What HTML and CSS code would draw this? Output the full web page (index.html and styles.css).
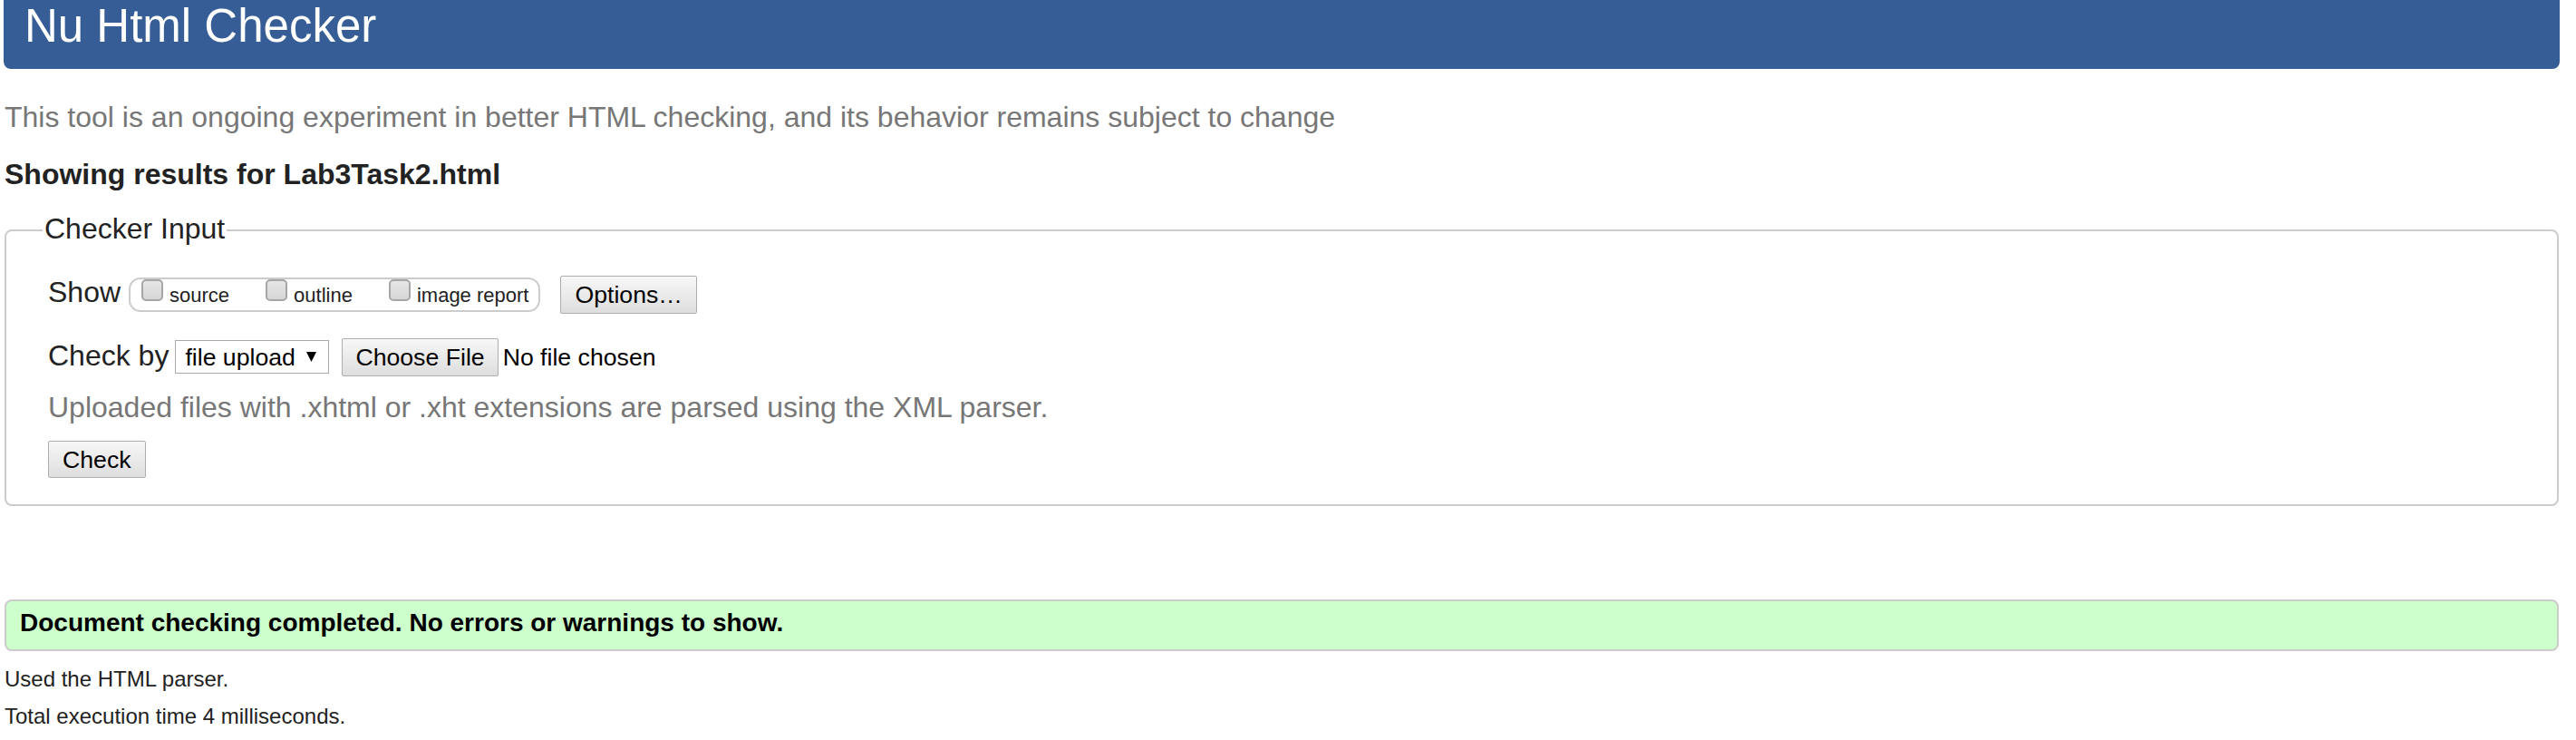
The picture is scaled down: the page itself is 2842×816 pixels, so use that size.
FILE: index.html
```html
<!DOCTYPE html>
<html lang="en">
<head>
<meta charset="utf-8">
<title>Nu Html Checker</title>
<link rel="stylesheet" href="styles.css">
</head>
<body>
<header class="masthead"><h1>Nu Html Checker</h1></header>
<p class="intro">This tool is an ongoing experiment in better HTML checking, and its behavior remains subject to change</p>
<h2 class="results-for">Showing results for Lab3Task2.html</h2>
<fieldset class="checker-input">
  <legend>Checker Input</legend>
  <div class="row show-row">
    <span class="label">Show</span>
    <span class="pill">
      <span class="opt"><span class="cb"></span><span class="opt-text">source</span></span>
      <span class="opt"><span class="cb"></span><span class="opt-text">outline</span></span>
      <span class="opt"><span class="cb"></span><span class="opt-text">image report</span></span>
    </span>
    <button class="btn btn-options" type="button">Options…</button>
  </div>
  <div class="row check-row">
    <span class="label">Check by</span>
    <span class="select"><span>file upload</span><svg class="arrow" width="11" height="11" viewBox="0 0 11 11"><polygon points="0,0 11,0 5.5,11" fill="#000"/></svg></span>
    <button class="btn btn-file" type="button">Choose File</button>
    <span class="no-file">No file chosen</span>
  </div>
  <p class="hint">Uploaded files with .xhtml or .xht extensions are parsed using the XML parser.</p>
  <button class="btn btn-check" type="button">Check</button>
</fieldset>
<div class="success">Document checking completed. No errors or warnings to show.</div>
<p class="meta">Used the HTML parser.</p>
<p class="meta meta-time">Total execution time 4 milliseconds.</p>
</body>
</html>
```
FILE: styles.css
```css
* { box-sizing: border-box; }

body {
  margin: 0;
  padding: 0 19px 0 5px;
  font-family: "Liberation Sans", Arial, sans-serif;
  font-size: 32px;
  color: #222;
  background: #fff;
}

.masthead {
  margin: 0 -1px;
  height: 76px;
  padding: 0 24px 0 23px;
  background: #365d95;
  border-radius: 0 0 8px 8px;
}

.masthead h1 {
  margin: 0;
  font-size: 51px;
  font-weight: normal;
  line-height: 58px;
  color: #fff;
}

.intro {
  margin: 33px 0 0;
  line-height: 40px;
  color: #777;
}

.results-for {
  margin: 23px 0 0;
  font-size: 32px;
  font-weight: bold;
  line-height: 40px;
}

.checker-input {
  margin: 22px 0 0;
  padding: 0 20px 29px 46px;
  border: 2px solid #ccc;
  border-radius: 8px;
  min-width: 0;
}

.checker-input legend {
  margin-left: -6px;
  padding: 0 2px 4px;
  font-size: 32px;
  line-height: 36px;
}

.row {
  display: flex;
  align-items: flex-start;
}

.show-row { margin-top: 28px; }
.check-row { margin-top: 26px; }

.label { line-height: 40px; }

.pill {
  display: flex;
  align-items: flex-start;
  height: 38px;
  margin: 4px 0 0 9px;
  padding: 0 11px 0 12px;
  border: 2px solid #ccc;
  border-radius: 13px;
  font-size: 22px;
}

.opt {
  display: flex;
  align-items: flex-start;
  gap: 7px;
}

.opt + .opt { margin-left: 40px; }

.cb {
  width: 24px;
  height: 24px;
  border: 2px solid #a6a6a6;
  border-radius: 5px;
  background: linear-gradient(#e6e6e6, #d6d6d6);
}

.opt-text {
  margin-top: 5px;
  line-height: 26px;
}

.btn {
  height: 42px;
  padding: 0 15px;
  font-family: inherit;
  font-size: 26.67px;
  line-height: 32px;
  color: #000;
  border: 1px solid #adadad;
  border-radius: 2px;
  background: linear-gradient(#f7f7f7, #dedede);
}

.btn-options { margin: 2px 0 0 22px; }
.btn-file { margin: 1px 0 0 14px; padding: 0 14px; }

.select {
  display: flex;
  align-items: center;
  justify-content: space-between;
  width: 170px;
  height: 37px;
  margin: 3px 0 0 7px;
  padding: 0 13px 0 10px;
  border: 1px solid #a9a9a9;
  background: #fff;
  font-size: 26.67px;
  line-height: 32px;
  color: #000;
}

.no-file {
  margin: 6px 0 0 5px;
  font-size: 26.67px;
  line-height: 32px;
  color: #000;
}

.hint {
  margin: 14px 0 0;
  line-height: 40px;
  color: #777;
}

.btn-check {
  display: block;
  height: 41px;
  margin-top: 17px;
}

.success {
  margin-top: 103px;
  padding: 6px 15px 11px;
  border: 2px solid #ccc;
  border-radius: 8px;
  background: #ccffcc;
  font-size: 28px;
  font-weight: bold;
  line-height: 36px;
  color: #000;
}

.meta {
  margin: 16px 0 0;
  font-size: 24px;
  line-height: 30px;
}

.meta-time { margin-top: 11px; }
```
